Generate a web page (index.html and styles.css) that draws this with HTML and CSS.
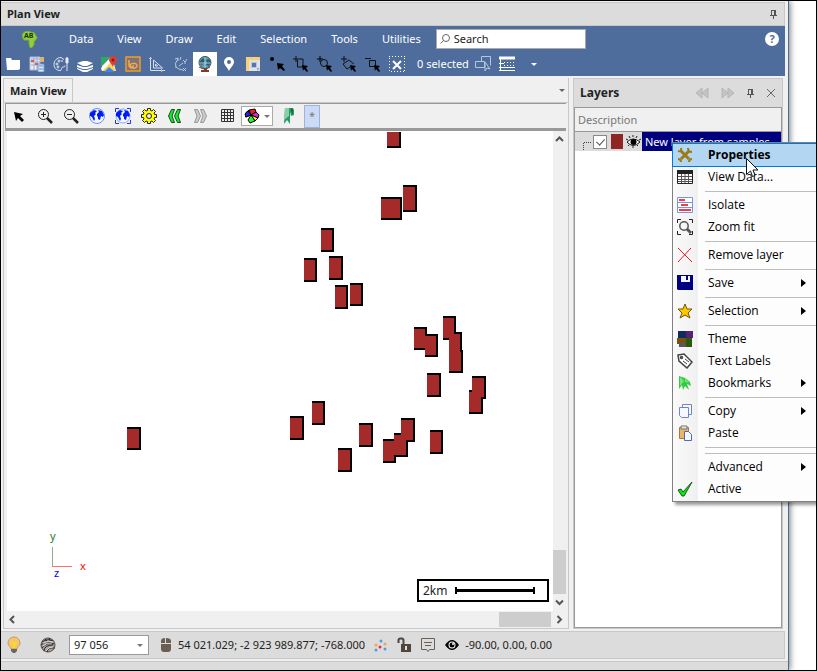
FILE: index.html
```html
<!DOCTYPE html>
<html lang="en">
<head>
<meta charset="utf-8">
<title>Plan View</title>
<link rel="stylesheet" href="styles.css">
</head>
<body>
<div class="window">
  <header class="titlebar">
    <h1>Plan View</h1>
    <button class="plain" aria-label="Pin window"><svg width="7" height="9" viewBox="0 0 7 9" fill="none" stroke="#555"><path d="M1 .5h5M1.500 1v4M4.500 1v4M5.500 1v4M0 5.500h7M3.500 6v3"/></svg></button>
  </header>

  <div class="ribbon">
    <nav class="menubar">
      <svg class="logo" width="16" height="17" viewBox="0 0 16 17"><path d="M3 .5h4l3 1h2l3 5-1 2-2 2v3l-2 3H8l-1-4V9H2L.5 6V3z" fill="#93cc3c" stroke="#7db035"/><text x="2" y="7" class="logo-text">AB</text></svg>
      <a href="#">Data</a><a href="#">View</a><a href="#">Draw</a><a href="#">Edit</a><a href="#">Selection</a><a href="#">Tools</a><a href="#">Utilities</a>
      <label class="search"><svg width="10" height="10" viewBox="0 0 10 10" fill="none" stroke="#666"><circle cx="6" cy="4" r="3.500"/><path d="M3.500 6.500L.5 9.500"/></svg><input type="text" placeholder="Search" aria-label="Search"></label>
      <button class="plain help" aria-label="Help">?</button>
    </nav>
    <div class="tools">
      <button aria-label="Open"><svg viewBox="0 0 16 16"><path d="M1 2h5l1 2h8v9l-2 1H2z" fill="#fff"/></svg></button>
      <button aria-label="Data table"><svg viewBox="0 0 16 16"><path d="M1 1h10v13H1z" fill="#e8edf7" stroke="#a9b8d6"/><path d="M2 3h9M2 6h9M2 9h9M5 1v13M8 1v13" stroke="#9aabd0"/><path d="M2 4h3v2H2zM6 7h3v2H6z" fill="#e2574e"/><path d="M9 8h6v8H9z" fill="#dfe9fa" stroke="#6b93c9"/><path d="M10 10h4M10 13h4" stroke="#5987c9"/><path d="M11 1h4v5h-4z" fill="#ddb36b"/></svg></button>
      <button aria-label="Colours"><svg viewBox="0 0 16 16" fill="none" stroke="#dce4f2"><path d="M8 1.500c-4 0-7 3-7 7s3 6 6 6c2 0 1-2 2-3s3 0 3-2M8 1.500l3 2M14 1v14"/><path d="M13 2v5h2V2z" fill="#fff"/><circle cx="4" cy="8" r="1"/><circle cx="6" cy="5" r="1"/><circle cx="5" cy="11" r="1"/><circle cx="9" cy="5" r=".5"/></svg></button>
      <button aria-label="Layers"><svg viewBox="0 0 16 16" fill="#fff"><path d="M0 7l6-2h4l6 2-6 3H6zM0 9l6 2h4l6-2v2l-6 2H6l-6-2zM0 12l6 2h4l6-2v1l-6 3H6l-6-3z"/></svg></button>
      <button aria-label="Google map"><svg viewBox="0 0 16 16"><path d="M1 1h10l4 14H1z" fill="#eee"/><path d="M0 1h10L0 11z" fill="#2fa866"/><path d="M1 15L10 6l5 9H6z" fill="#ffd64a"/><path d="M3 16l5-5 6 5z" fill="#3f83f0"/><path d="M0 12l9-9 2 2-10 10z" fill="#fff"/><path d="M12 0c-2 0-4 2-4 4s3 4 4 7c0-3 4-5 4-7s-2-4-4-4z" fill="#e23b30"/><circle cx="12" cy="4" r="1.500" fill="#8e1b16"/></svg></button>
      <button aria-label="Bing map"><svg viewBox="0 0 16 16" fill="none" stroke="#f59a23"><path d="M1 1h14v14H1z" stroke-width="1.500" fill="#7b7478"/><path d="M4 4v5M4 9c0 4 8 4 8 1 0-4-7-3-7 0 1 2 4 1 3-1" stroke="#f9a94c" stroke-width="1.500"/></svg></button>
      <button aria-label="Measure"><svg viewBox="0 0 16 16" fill="none" stroke="#d5deee"><path d="M1.500 1v13.500H16M4.500 4v8h9zM6.500 8v2h2z"/><path d="M0 2.500h3M12.500 13v3" stroke="#b0bfdb"/></svg></button>
      <button aria-label="Axes"><svg viewBox="0 0 16 16" fill="none" stroke="#b9c7e0"><path d="M5 3Q1 7 3 12M2 3l3-1v3M3 11l3 2 4 1M6 10l4-3M8 1l-1 3M10 4l2 2 2-3M12 6v2M10 12l3 3M13 12l-3 3"/></svg></button>
      <button class="active" aria-label="Globe"><svg viewBox="0 0 16 16"><circle cx="8" cy="6.500" r="6" fill="#57a3b5" stroke="#3c4c55"/><path d="M3 5l3-3 2 2-1 3-2 2-2-1zM9 4l3-1 2 3-2 4-3-1 1-2z" fill="#2e5d6f"/><path d="M2.500 7h11M8 1v11" stroke="#a4cbd4" fill="none"/><path d="M2 11q6 4 11 0" stroke="#833a2e" fill="none"/><path d="M7 13h3v1h2v2H4v-2h3z" fill="#833a2e"/></svg></button>
      <button aria-label="Place"><svg viewBox="0 0 16 16"><path d="M8 1a5 5 0 0 0-5 5c0 3 4 6 5 9 1-3 5-6 5-9a5 5 0 0 0-5-5zm0 3a2 2 0 1 1 0 4 2 2 0 0 1 0-4z" fill="#fff" fill-rule="evenodd"/></svg></button>
      <button aria-label="Plot frame"><svg viewBox="0 0 16 16"><path d="M1 1h14v14H1z" fill="#e8e1c5"/><path d="M1 1h14v3H4v11H1z" fill="#f5cf79"/><path d="M5 5h10v7l-3 3H5z" fill="#dbe2f0"/><path d="M6.500 6.500h5v5h-5z" fill="#5874a7" stroke="#bbc5d9"/><path d="M12 15v-3h3" fill="#9daac4"/></svg></button>
      <button aria-label="Select point"><svg viewBox="0 0 16 16"><circle cx="3" cy="3" r="2"/><path d="M8 7l7 1-2 2 3 4-1 1-4-3-2 2z"/></svg></button>
      <button aria-label="Select rectangle"><svg viewBox="0 0 16 16"><path d="M3 0v6M0 3h10v7M4.500 4v7H10" fill="none" stroke="#111"/><path d="M9 9l6 1-2 2 2 3-1 1-3-3-1 2z"/></svg></button>
      <button aria-label="Select circle"><svg viewBox="0 0 16 16"><path d="M3 0v6M0 3h6" stroke="#000"/><circle cx="7" cy="7" r="3.500" fill="none" stroke="#111"/><path d="M9 9l6 1-2 2 2 3-1 1-3-3-1 2z"/></svg></button>
      <button aria-label="Select polygon"><svg viewBox="0 0 16 16"><path d="M3 0v6M0 3h6M2 8l6-4 5 4M2 8l4 5 3-2" fill="none" stroke="#111"/><path d="M9 9l6 1-2 2 2 3-1 1-3-3-1 2z"/></svg></button>
      <button aria-label="Deselect rectangle"><svg viewBox="0 0 16 16"><path d="M0 2.500h6M4.500 4.500h6v6h-6z" fill="none" stroke="#111"/><path d="M9 9l6 1-2 2 2 3-1 1-3-3-1 2z"/></svg></button>
      <button aria-label="Clear selection"><svg viewBox="0 0 16 16" fill="none" stroke="#fff"><path d="M0 .5h16M.5 2v14M15.500 2v14M2 15.500h13" stroke-dasharray="1 2"/><path d="M4 5l8 8M12 5l-8 8" stroke-width="2"/></svg></button>
      <span class="count">0 selected</span>
      <button aria-label="Pick shapes"><svg viewBox="0 0 16 16" fill="none" stroke="#b8c5de"><path d="M6.500.500h9v9M.500 5.500h9v6h-9zM6.500.500v5M10 6v9l2-3 3 1z"/></svg></button>
      <button aria-label="Selection list"><svg viewBox="0 0 16 16" fill="none" stroke="#fff"><path d="M0 2h16" stroke-width="3"/><path d="M0 7.500h5M0 11.500h16M0 14.500h16M1.500 3v12"/><path d="M5 6.500h11M5 9.500h11" stroke-dasharray="1 2"/></svg></button>
      <button class="more" aria-label="More tools"><i class="caret"></i></button>
    </div>
  </div>

  <main class="workspace">
    <section class="document">
      <div class="tabs"><button class="tab">Main View</button><button class="plain tab-list" aria-label="Tab list"><i class="caret"></i></button></div>
      <div class="view-tools">
        <button aria-label="Pointer"><svg viewBox="0 0 16 16"><path d="M3 4l9 2-3 2 4 4-2 2-4-4-2 3z"/></svg></button>
        <button aria-label="Zoom in"><svg viewBox="0 0 16 16" fill="none" stroke="#222"><circle cx="6.500" cy="6.500" r="5"/><path d="M4 6.500h5M6.500 4v5"/><path d="M10 10l5 5" stroke-width="2.500"/></svg></button>
        <button aria-label="Zoom out"><svg viewBox="0 0 16 16" fill="none" stroke="#222"><circle cx="6.500" cy="6.500" r="5"/><path d="M4 6.500h5"/><path d="M10 10l5 5" stroke-width="2.500"/></svg></button>
        <button aria-label="Zoom world"><svg viewBox="0 0 16 16"><circle cx="8" cy="8" r="7.500" fill="#f4f6ff" stroke="#6f8bff"/><path d="M1 5l4-3 3 1-2 2 1 1-2 2 1 3-1 2-2-4-2-1zM8 6l2-2-1-2 4 1 2 4-1 2-2-1-1 4-2-1V9L8 8z" fill="#001cf2"/></svg></button>
        <button aria-label="Zoom extents"><svg viewBox="0 0 16 16"><circle cx="8" cy="8" r="7" fill="#f4f6ff" stroke="#8fa4ff"/><path d="M1 5l4-3 3 1-2 2 1 1-2 2 1 3-1 2-2-4-2-1zM8 6l2-2-1-2 4 1 2 4-1 2-2-1-1 4-2-1V9L8 8z" fill="#001cf2"/><path d="M.5 4V.5H4M12 .5h3.500V4M15.500 12v3.500H12M4 15.500H.5V12" stroke="#1438ff" fill="none"/></svg></button>
        <button aria-label="Settings"><svg viewBox="0 0 16 16"><path d="M6.500.500h3v2l1.500.5 1.500-1.500 2 2L13 5l.5 1.500h2v3h-2L13 11l1.500 1.500-2 2L11 13l-1.500.5v2h-3v-2L5 13l-1.500 1.500-2-2L3 11l-.5-1.500h-2v-3h2L3 5 1.500 3.500l2-2L5 3l1.500-.5z" fill="#ff0" stroke="#222"/><circle cx="8" cy="8" r="2.500" fill="#eee" stroke="#222"/></svg></button>
        <button aria-label="Previous view"><svg viewBox="0 0 16 16" fill="#12ef2b" stroke="#174c1d"><path d="M4.500 1.500h3L5 8l2.500 6.500h-3L1.500 8zM10.500 1.500h3L11 8l2.500 6.500h-3L7.500 8z"/></svg></button>
        <button aria-label="Next view"><svg viewBox="0 0 16 16" fill="#ccc" stroke="#999"><path d="M1.500 1.500h3l3 6.500-3 6.500h-3L4 8zM7.500 1.500h3l3 6.500-3 6.500h-3L10 8z"/></svg></button>
        <button aria-label="Grid"><svg viewBox="0 0 16 16" fill="none" stroke="#333"><path d="M2.500 1.500h12v12h-12zM5.500 1v13M8.500 1v13M11.500 1v13M2 4.500h13M2 7.500h13M2 10.500h13"/></svg></button>
        <button class="combo" aria-label="Shading"><svg viewBox="0 0 16 16" stroke="#000"><path d="M7 7L5 2 1.500 5v4z" fill="#73e"/><path d="M7 7L5 2l6-1 1 3z" fill="#e22"/><path d="M7 7l5-3 3 3-1 3z" fill="#d2d"/><path d="M7 7l7 3-3 3z" fill="#fe1"/><path d="M7 7l4 6-5 2-2-3z" fill="#3e3"/><path d="M7 7l-5 2-1-3 3-3z" fill="#22e"/></svg><i class="caret"></i></button>
        <button class="mark" aria-label="Bookmark"><svg viewBox="0 0 16 16"><path d="M4 0h8l1 2v5l-3 1-1-4v12l-3-4-3 4z" fill="#2b9963"/><path d="M4 0h4v8l-5 4z" fill="#86cfa8"/><path d="M10 0v3l2 4V1z" fill="#10713d"/></svg></button>
        <button class="star" aria-label="Annotations">*</button>
      </div>
      <div class="view-grid">
        <div class="canvas">
          <svg class="map" aria-label="Sample map"><g transform="translate(-7 -131)">
            <path class="edges" d="M387 132h14v16h-14zM381 197h21v23h-21zM403 185h14v27h-14zM321 228h13v24h-13zM304 258h13v24h-13zM329 256h14v24h-14zM335 285h13v24h-13zM350 283h13v23h-13zM414 327h13v23h-13zM425 334h13v23h-13zM443 316h13v24h-13zM449 332h13v25h-13zM449 350h14v23h-14zM427 373h14v24h-14zM472 376h14v23h-14zM469 390h14v24h-14zM401 418h14v24h-14zM394 433h14v24h-14zM383 439h13v24h-13zM430 430h13v24h-13zM312 401h13v24h-13zM290 416h14v24h-14zM359 423h14v24h-14zM338 448h14v24h-14zM127 427h14v23h-14z"/>
            <path class="samples" d="M387 132h12v14h-12zM381 199h19v19h-19zM403 187h12v23h-12zM321 230h11v20h-11zM304 260h11v20h-11zM329 258h12v20h-12zM335 287h11v20h-11zM350 285h11v19h-11zM414 329h11v19h-11zM425 336h11v19h-11zM443 318h11v20h-11zM449 334h11v21h-11zM449 352h12v19h-12zM427 375h12v20h-12zM472 378h12v19h-12zM469 392h12v20h-12zM401 420h12v20h-12zM394 435h12v20h-12zM383 441h11v20h-11zM430 432h11v20h-11zM312 403h11v20h-11zM290 418h12v20h-12zM359 425h12v20h-12zM338 450h12v20h-12zM127 429h12v19h-12z"/>
            <path d="M52.500 547v19" stroke="#8fae8f"/><path d="M52 566.500h20" stroke="#ff7070"/>
            <text x="50" y="540" fill="#178017">y</text><text x="80" y="570" fill="#f00">x</text><text x="54" y="577" fill="#00f">z</text>
          </g></svg>
          <div class="scale"><span>2km</span><i></i></div>
        </div>
        <div class="vbar"><button class="plain" aria-label="Scroll up"><svg width="9" height="7" viewBox="0 0 9 7"><path d="M1 5l3.500-3.500L8 5" class="chev"/></svg></button><i class="thumb"></i><button class="plain" aria-label="Scroll down"><svg width="9" height="7" viewBox="0 0 9 7"><path d="M1 1.500L4.500 5 8 1.500" class="chev"/></svg></button></div>
        <div class="hbar"><button class="plain" aria-label="Scroll left"><svg width="7" height="9" viewBox="0 0 7 9"><path d="M5 1L1.500 4.500 5 8" class="chev"/></svg></button><i class="thumb"></i><button class="plain" aria-label="Scroll right"><svg width="7" height="9" viewBox="0 0 7 9"><path d="M1.500 1L5 4.500 1.500 8" class="chev"/></svg></button></div>
      </div>
    </section>

    <aside class="layers">
      <div class="layers-head"><h2>Layers</h2>
        <button class="plain" aria-label="Back"><svg width="14" height="12" viewBox="0 0 14 12" fill="#c4c4c4" stroke="#b5b5b5"><path d="M7 1v10L1 6zM13 1v10L7 6z"/></svg></button>
        <button class="plain" aria-label="Forward"><svg width="14" height="12" viewBox="0 0 14 12" fill="#c4c4c4" stroke="#b5b5b5"><path d="M1 1v10l6-5zM7 1v10l6-5z"/></svg></button>
        <button class="plain" aria-label="Pin panel"><svg width="7" height="9" viewBox="0 0 7 9" fill="none" stroke="#555"><path d="M1 .5h5M1.500 1v4M4.500 1v4M5.500 1v4M0 5.500h7M3.500 6v3"/></svg></button>
        <button class="plain" aria-label="Close panel"><svg width="10" height="10" viewBox="0 0 10 10" stroke="#666"><path d="M1 1l8 8M9 1L1 9"/></svg></button>
      </div>
      <div class="layers-col">Description</div>
      <div class="layer-list">
        <div class="layer">
          <svg width="17" height="20" fill="none" stroke="#444" stroke-dasharray="1 1"><path d="M8.500 20v-9.500H17"/></svg>
          <input type="checkbox" checked id="layer-on"><i class="swatch"></i>
          <svg width="21" height="20" viewBox="0 0 21 20"><path d="M4 10q6-6 13 0-7 7-13 0z" fill="#fff" stroke="#111"/><circle cx="10.500" cy="10" r="3"/><path d="M3 7l2 1M6 4l1 2M10 3v2M14 4l-1 2M18 7l-2 1M5 14l1-1M10 16v-2M15 14l-1-1" stroke="#222"/></svg>
          <label for="layer-on">New layer from samples</label>
        </div>
      </div>
    </aside>
  </main>

  <footer class="status">
    <svg class="bulb" width="16" height="18" viewBox="0 0 16 18"><path d="M8 1a6 6 0 0 0-6 6c0 3 3 4 3 6h6c0-2 3-3 3-6a6 6 0 0 0-6-6z" fill="#f7c36c" stroke="#c9995c"/><path d="M6 6l2 3 2-3M8 8v4" stroke="#f2e21a" stroke-width="2" fill="none"/><path d="M5 13h6v2l-2 2H7l-2-2z" fill="#666"/></svg>
    <svg class="ball" width="16" height="16" viewBox="0 0 16 16"><circle cx="8" cy="8" r="7" fill="#a5a19e" stroke="#55504d"/><path d="M2 5q6-4 11-1M1 8q5-5 13-1M2 11q5-6 11-4M4 14q0-6 9-6M7 15q1-5 8-4M5 2l2 2M9 1l2 4" fill="none" stroke="#2d2927"/><path d="M3 6q6-3 10-1M3 9q4-4 9-3M6 14q2-4 7-4" fill="none" stroke="#ddd"/></svg>
    <span class="zoom-level"><select aria-label="Scale"><option>97 056</option></select><i class="caret"></i></span>
    <svg width="12" height="16" viewBox="0 0 12 16"><path d="M1 6V4q0-3 4-3v5zM6 1q5 0 5 3v2H6zM1 7h10v5q0 3-3 3H4q-3 0-3-3z" fill="#6d5e53"/></svg>
    <span class="coords">54 021.029; -2 923 989.877; -768.000</span>
    <svg class="dots" width="14" height="14" viewBox="0 0 14 14"><g fill="#5b9bd5"><circle cx="7" cy="3" r="1.500"/><circle cx="2" cy="12" r="1.500"/><circle cx="11" cy="11" r="1.500"/></g><g fill="#f0a35b"><circle cx="2" cy="7" r="1.500"/><circle cx="11" cy="6" r="1.500"/></g><circle cx="6" cy="9" r="1.500" fill="#d34"/></svg>
    <svg class="lock" width="15" height="16" viewBox="0 0 15 16"><path d="M1.500 6V3.500q0-2 2-2h1q2 0 2 2V7" fill="none" stroke="#51443c" stroke-width="2"/><path d="M4 7h10v8H4z" fill="#51443c"/><path d="M9 9v4" stroke="#ddd" stroke-width="2"/></svg>
    <svg class="note" width="16" height="16" viewBox="0 0 16 16" fill="none" stroke="#6d5e53"><path d="M1.500 1.500h13v11h-5L8 14.500l-1.500-2h-5zM4 5.500h8M5 8.500h6"/></svg>
    <svg class="eye" width="14" height="12" viewBox="0 0 14 12"><path d="M0 6q7-10 14 0-7 10-14 0z"/><circle cx="7" cy="6" r="3.500" fill="#fff"/><circle cx="7" cy="6" r="2.500"/><circle cx="8" cy="5" r="1" fill="#fff"/></svg>
    <span>-90.00, 0.00, 0.00</span>
  </footer>
  <div class="strip"></div>
</div>

<div class="menu" role="menu">
  <button role="menuitem" class="current"><svg viewBox="0 0 16 16" fill="none" stroke="#9b7b16" stroke-width="3"><path d="M4 4l8 8M12 4l-8 8"/><path d="M1 4q4 1 3-3M11 1q0 4 4 4M12 15q0-3 3-3M1 12q3 0 3 3" stroke-width="2"/></svg>Properties</button>
  <button role="menuitem"><svg viewBox="0 0 16 16"><path d="M.5 1.500h15v13H.5z" fill="#fff" stroke="#222"/><path d="M0 1h16v4H0z" fill="#222"/><path d="M1 7.500h14M1 10.500h14M1 12.500h14M4.500 5v9M8 5v9M11.500 5v9" stroke="#555"/></svg>View Data...</button>
  <hr>
  <button role="menuitem"><svg viewBox="0 0 16 16"><path d="M.5.500h15v15H.5zM1 5.500h14M1 10.500h14" fill="#fff" stroke="#7b94da"/><path d="M2 3h6M4 8h7M2 13h12" stroke="#f23c49" stroke-width="2"/></svg>Isolate</button>
  <button role="menuitem"><svg viewBox="0 0 16 16" fill="none" stroke="#222"><path d="M.5 4V.5H4M12 .5h3.500V4M15.500 12v3.500H12M4 15.500H.5V12"/><circle cx="7" cy="7" r="4.200" stroke="#555" stroke-width="1.500"/><path d="M10 10l4 4" stroke-width="3" stroke="#555"/></svg>Zoom fit</button>
  <hr>
  <button role="menuitem"><svg viewBox="0 0 16 16" stroke="#e11b22"><path d="M1 1l14 14M14 1L1 15"/></svg>Remove layer</button>
  <hr>
  <button role="menuitem" class="sub"><svg viewBox="0 0 16 16"><path d="M0 0h16v15H1l-1-1z" fill="#000083"/><path d="M4 1h9v6H4z" fill="#f4f6ff"/><path d="M9 1h2v4H9z" fill="#000083"/></svg>Save</button>
  <hr>
  <button role="menuitem" class="sub"><svg viewBox="0 0 16 16"><path d="M8 1l2 5h5l-4 4 2 5-5-3-5 3 2-5-4-4h5z" fill="#ffc900" stroke="#765400"/></svg>Selection</button>
  <hr>
  <button role="menuitem"><svg viewBox="0 0 16 16"><path d="M1 0h8v8H1z" fill="#102b5c"/><path d="M9 0h7v7H9z" fill="#592078"/><path d="M0 7h9v6H0z" fill="#795309"/><path d="M9 7h6v9H9z" fill="#275b0a"/><path d="M2 12h7v4H2z" fill="#5c5463"/></svg>Theme</button>
  <button role="menuitem"><svg viewBox="0 0 16 16" fill="#fff" stroke="#444" stroke-width="1.500"><path d="M1 2l6-1 8 8-5 6-8-7z"/><circle cx="4.500" cy="4.500" r="1"/><path d="M6 8l4 3M8 6l4 3" stroke-width="1"/></svg>Text Labels</button>
  <button role="menuitem" class="sub"><svg viewBox="0 0 16 16"><path d="M2 1l6 2 5 4 1 4-4-2 2 6-4-4-2 4-1-5-3 4z" fill="#35ca42"/><path d="M3 2l4 4-4 5zM8 3l4 5-4-1z" fill="#77e581"/></svg>Bookmarks</button>
  <hr>
  <button role="menuitem" class="sub"><svg viewBox="0 0 16 16" fill="#f5f8ff" stroke="#7186c7"><path d="M5.500 1.500h9v10h-9z"/><path d="M2.500 4.500h9v10h-7l-2-2z"/></svg>Copy</button>
  <button role="menuitem"><svg viewBox="0 0 16 16"><path d="M2.500 2.500h9v11h-9z" fill="#e9b568" stroke="#ae7734"/><path d="M4 1h6v3H4z" fill="#e4e4e4" stroke="#777"/><path d="M7.500 6.500h4l3 3v6h-7z" fill="#f2f6ff" stroke="#5369ad"/></svg>Paste</button>
  <hr><hr>
  <button role="menuitem" class="sub"><svg viewBox="0 0 16 16"></svg>Advanced</button>
  <button role="menuitem"><svg viewBox="0 0 16 16"><path d="M1 9l3-1 2 3 9-10-8 14H5z" fill="#11e516" stroke="#145d16"/></svg>Active</button>
</div>
<svg class="cursor" width="13" height="20" viewBox="0 0 13 20"><path d="M.5.500v16l4-3.500 2 5.500 2.500-1-2-5.500h5z" fill="#fff" stroke="#111"/></svg>
</body>
</html>
```
FILE: styles.css
```css
* { box-sizing: border-box; }
body {
  margin: 0;
  height: 100vh;
  padding-right: 27px;
  position: relative;
  overflow: hidden;
  border: 1px solid #000;
  background: #fff;
  color: #222;
  font: 11px/14px "Noto Sans", sans-serif;
}
button, input, select { font: inherit; color: inherit; margin: 0; }
button { border: 0; padding: 0; background: none; display: flex; align-items: center; justify-content: center; }
svg { display: block; flex: none; }
h1, h2 { margin: 0; font-size: 11px; font-weight: bold; }

.window {
  height: 100%;
  display: flex;
  flex-direction: column;
  padding: 1px 3px 0 0;
  background: #f0f0f0;
  border-right: 1px solid #4a6c9b;
  box-shadow: 1px 0 6px #777;
}
.titlebar {
  flex: none;
  height: 24px;
  display: flex;
  align-items: center;
  justify-content: space-between;
  padding: 0 7px 0 6px;
  background: #dcdcdc;
  border: 1px solid #c8c8c8;
  border-left: 0;
}

/* Ribbon */
.ribbon { flex: none; height: 50px; background: #4f6d9c; color: #fff; }
.menubar { height: 26px; display: flex; align-items: center; gap: 24px; padding: 0 6px 0 21px; }
.menubar a { color: #fff; text-decoration: none; }
.logo { margin-right: 7px; }
.logo-text { font: bold 7px "Noto Sans", sans-serif; fill: #16360e; }
.search {
  display: flex;
  align-items: center;
  gap: 4px;
  width: 150px;
  height: 20px;
  margin-left: -9px;
  padding: 0 3px;
  background: #fff;
  border: 1px solid #aaa;
}
.search input { flex: 1; min-width: 0; border: 0; padding: 0; outline: 0; }
.search input::placeholder { color: #222; opacity: 1; }
.help {
  width: 14px;
  height: 14px;
  margin-left: auto;
  border-radius: 50%;
  background: #fff;
  color: #4f6d9c;
  font-weight: bold;
}
.tools { height: 24px; display: flex; align-items: center; }
.tools button { width: 24px; height: 24px; }
.tools svg, .view-tools svg { width: 16px; height: 16px; }
.tools .active { background: #fff; }
.tools .count { width: 62px; padding-left: 8px; white-space: nowrap; }
.tools .more { width: 30px; }
.caret { width: 0; height: 0; border: 3px solid transparent; border-top-color: currentColor; border-bottom: 0; }

/* Workspace */
.workspace { flex: 1; min-height: 0; display: flex; gap: 4px; padding: 2px; }
.document { flex: 1; min-width: 0; display: flex; flex-direction: column; border: 1px solid #c8c8c8; border-top: 0; }
.tabs { flex: none; height: 25px; display: flex; justify-content: space-between; border-bottom: 1px solid #c8c8c8; }
.tab { height: 24px; padding: 0 6px; border: 1px solid #c8c8c8; border-width: 1px 1px 0 0; font-weight: bold; }
.tab-list { width: 13px; color: #666; }
.view-tools {
  flex: none;
  height: 28px;
  display: flex;
  align-items: center;
  margin: 0 2px 0 1px;
  border: solid #999;
  border-width: 1px 0 3px 1px;
}
.view-tools button { width: 26px; height: 24px; }
.view-tools .combo { width: 32px; height: 20px; margin-left: 1px; gap: 4px; background: #fff; border: 1px solid #aaa; color: #777; }
.view-tools .mark { width: 30px; margin-left: 1px; }
.view-tools .star { width: 16px; height: 23px; background: #cddaf5; border: 1px solid #9db2dd; color: #777; }
.view-grid { flex: 1; min-height: 0; display: grid; grid-template: 1fr 17px / 1fr 15px; padding-left: 3px; }
.canvas { position: relative; min-height: 0; overflow: hidden; background: #fff; }
.map { width: 100%; height: 100%; shape-rendering: crispEdges; font: 11px "Noto Sans", sans-serif; }
.edges { fill: #000; }
.samples { fill: #a52a2a; }
.scale {
  position: absolute;
  right: 4px;
  bottom: 9px;
  width: 132px;
  height: 23px;
  display: flex;
  align-items: center;
  gap: 7px;
  padding: 0 12px 0 4px;
  background: #fff;
  border: 2px solid #000;
}
.scale span { font-size: 12px; }
.scale i { flex: 1; height: 7px; border: solid #000; border-width: 0 2px; background: linear-gradient(#000, #000) center / 100% 3px no-repeat; }
.vbar { display: flex; flex-direction: column; align-items: flex-start; }
.vbar button { width: 13px; height: 17px; }
.vbar .thumb { width: 13px; height: 44px; margin-top: auto; background: #cdcdcd; }
.hbar { grid-column: 1 / -1; display: flex; align-items: center; margin-left: -3px; }
.hbar button { width: 17px; height: 16px; }
.hbar .thumb { width: 52px; height: 15px; margin-left: auto; background: #cdcdcd; }
.chev { fill: none; stroke: #555; stroke-width: 2; }

/* Layers panel */
.layers { flex: none; width: 210px; display: flex; flex-direction: column; border: 1px solid #c8c8c8; }
.layers-head { flex: none; height: 28px; display: flex; align-items: center; gap: 12px; padding: 0 6px; background: #dcdcdc; }
.layers-head h2 { margin-right: auto; font-size: 12px; }
.layers-col { flex: none; height: 24px; padding: 5px 3px; border: 1px solid #999; border-bottom: 0; color: #777; }
.layer-list { flex: 1; background: #fff; border: 1px solid #999; }
.layer { height: 19px; display: flex; align-items: center; overflow: hidden; background: linear-gradient(90deg, #dcdcdc 67px, #00007f 67px); }
.layer input { appearance: none; width: 14px; height: 14px; margin-left: 1px; border: 1px solid #888; background: #fff; display: grid; place-items: center; }
.layer input:checked::after { content: ""; width: 4px; height: 7px; margin-top: -2px; border: solid #555; border-width: 0 1px 1px 0; transform: rotate(42deg); }
.swatch { width: 12px; height: 15px; margin-left: 4px; background: #8f2525; }
.layer label { color: #fff; padding-left: 1px; white-space: nowrap; }

/* Status bar */
.status {
  flex: none;
  height: 28px;
  display: flex;
  align-items: center;
  padding-left: 5px;
  white-space: nowrap;
  background: #dcdcdc;
  border: 1px solid #c8c8c8;
  border-left: 0;
}
.ball { margin: 0 13px 0 18px; }
.zoom-level { display: flex; align-items: center; width: 80px; height: 20px; margin-right: 11px; padding: 0 5px 0 4px; background: #fff; border: 1px solid #999; }
.zoom-level select { flex: 1; min-width: 0; appearance: none; padding: 0; border: 0; background: none; }
.zoom-level .caret { color: #777; }
.coords { margin-left: 6px; }
.dots { margin: 0 9px; }
.note { margin: 0 9px 0 8px; }
.eye { margin-right: 6px; }
.strip { flex: none; height: 9px; margin: 2px -3px 0 0; background: #dcdcdc; border-top: 1px solid #c8c8c8; }

/* Context menu */
.menu {
  position: absolute;
  top: 141px;
  right: 0;
  width: 144px;
  display: flex;
  flex-direction: column;
  padding: 1px 0;
  border: 1px solid #808080;
  border-right: 0;
  background: linear-gradient(90deg, #fafafa, #f0f0f0 25px, #fdfdfd 25px);
  box-shadow: 3px 3px 3px #0006;
  color: #000;
  font: 12px/16px "Open Sans", sans-serif;
}
.menu button { width: 100%; height: 22px; justify-content: flex-start; gap: 15px; padding-left: 4px; white-space: nowrap; }
.menu svg { width: 16px; height: 16px; }
.menu .current { background: #b3d7f3; outline: 1px solid #0078d7; font-weight: bold; }
.menu .sub::after { content: ""; margin: 0 10px 0 auto; border: 4px solid transparent; border-left: 5px solid #000; border-right: 0; }
.menu hr { flex: none; height: 1px; margin: 3px 0 2px 32px; border: 0; background: #bdbdbd; }
.cursor { position: absolute; left: 745px; top: 157px; }
```
